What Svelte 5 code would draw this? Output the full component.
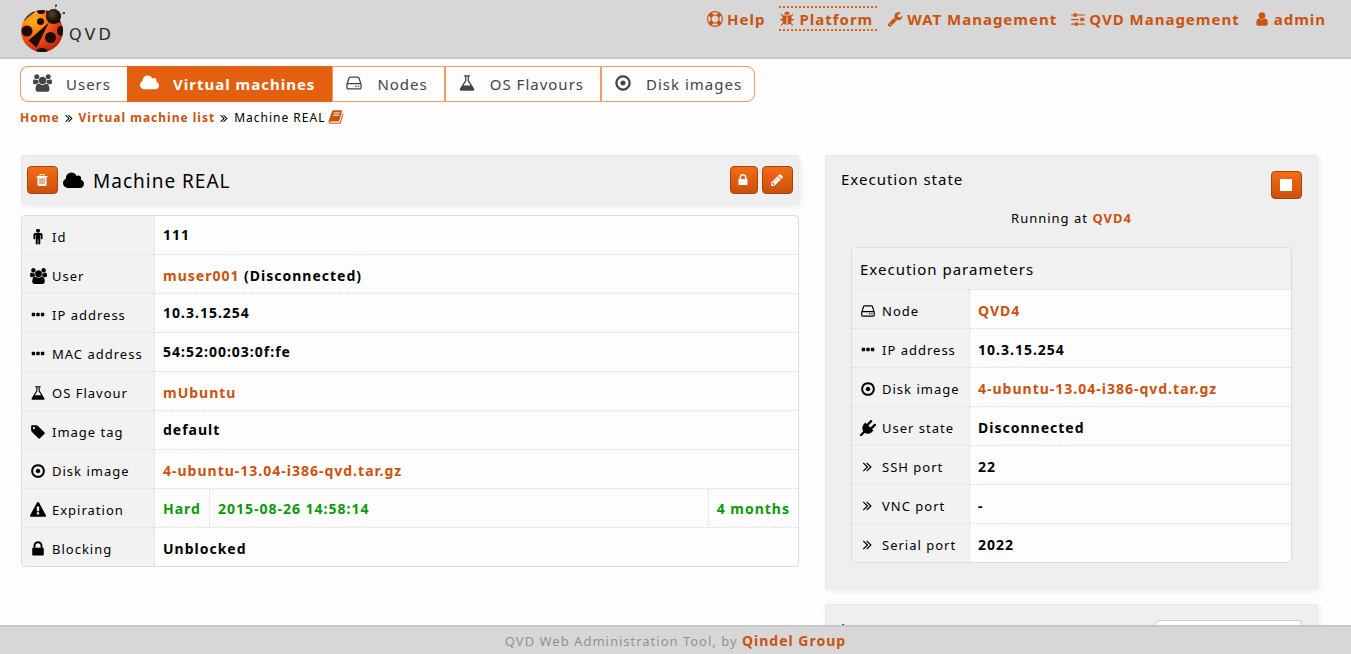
<script>
  const dot = (x) => `M${x} 736v192q0 40-28 68t-68 28h-192q-40 0-68-28t-28-68v-192q0-40 28-68t68-28h192q40 0 68 28t28 68z`;
  const bar = (x) => `M${x} 1376v-704q0-14-9-23t-23-9h-64q-14 0-23 9t-9 23v704q0 14 9 23t23 9h64q14 0 23-9t9-23z`;
  const led = (x) => `M${x} 1216q0 33-23.5 56.5t-56.5 23.5-56.5-23.5-23.5-56.5 23.5-56.5 56.5-23.5 56.5 23.5 23.5 56.5z`;
  const knob = (x, y) => `M${x} ${y}q26 0 45 19t19 45v256q0 26-19 45t-45 19h-256q-26 0-45-19t-19-45v-256q0-26 19-45t45-19z`;

  // Icon name -> [width in units, path]; every icon is 1792 units high.
  const icons = {
    lock: [1792, 'M640 768h512v-192q0-106-75-181t-181-75-181 75-75 181v192zm832 96v576q0 40-28 68t-68 28h-960q-40 0-68-28t-28-68v-576q0-40 28-68t68-28h32v-192q0-184 132-316t316-132 316 132 132 316v192h32q40 0 68 28t28 68z'],
    pencil: [1792, 'M491 1536l91-91-235-235-91 91v107h128v128h107zm523-928q0-22-22-22-10 0-17 7l-542 542q-7 7-7 17 0 22 22 22 10 0 17-7l542-542q7-7 7-17zm-54-192l416 416-832 832h-416v-416zm683 96q0 53-37 90l-166 166-416-416 166-165q36-38 90-38 53 0 91 38l235 234q37 39 37 91z'],
    disk: [1792, 'M1152 896q0 106-75 181t-181 75-181-75-75-181 75-181 181-75 181 75 75 181zm-256-544q-148 0-273 73t-198 198-73 273 73 273 198 198 273 73 273-73 198-198 73-273-73-273-198-198-273-73zm768 544q0 209-103 385.5t-279.5 279.5-385.5 103-385.5-103-279.5-279.5-103-385.5 103-385.5 279.5-279.5 385.5-103 385.5 103 279.5 279.5 103 385.5z'],
    user: [1792, 'M1536 1399q0 109-62.5 187t-150.5 78h-854q-88 0-150.5-78t-62.5-187q0-85 8.5-160.5t31.5-152 58.5-131 94-89 134.5-34.5q131 128 313 128t313-128q76 0 134.5 34.5t94 89 58.5 131 31.5 152 8.5 160.5zm-256-887q0 159-112.5 271.5t-271.5 112.5-271.5-112.5-112.5-271.5 112.5-271.5 271.5-112.5 271.5 112.5 112.5 271.5z'],
    angles: [1792, 'M915 896q0 13-10 23l-466 466q-10 10-23 10t-23-10l-50-50q-10-10-10-23t10-23l393-393-393-393q-10-10-10-23t10-23l50-50q10-10 23-10t23 10l466 466q10 10 10 23zm384 0q0 13-10 23l-466 466q-10 10-23 10t-23-10l-50-50q-10-10-10-23t10-23l393-393-393-393q-10-10-10-23t10-23l50-50q10-10 23-10t23 10l466 466q10 10 10 23z'],
    dots: [1792, dot(576) + dot(1088) + dot(1600)],
    wrench: [1792, 'M448 1472q0-26-19-45t-45-19-45 19-19 45 19 45 45 19 45-19 19-45zm644-420l-682 682q-37 37-90 37-52 0-91-37l-106-108q-38-36-38-90 0-53 38-91l681-681q39 98 114.5 173.5t173.5 114.5zm634-435q0 39-23 106-47 134-164.5 217.5t-258.5 83.5q-185 0-316.5-131.5t-131.5-316.5 131.5-316.5 316.5-131.5q58 0 121.5 16.5t107.5 46.5q16 11 16 28t-16 28l-293 169v224l193 107q5-3 79-48.5t135.5-81 70.5-35.5q15 0 23.5 10t8.5 25z'],
    tag: [1792, 'M576 448q0-53-37.5-90.5t-90.5-37.5-90.5 37.5-37.5 90.5 37.5 90.5 90.5 37.5 90.5-37.5 37.5-90.5zm1067 576q0 53-37 90l-491 492q-39 37-91 37-53 0-90-37l-715-716q-38-37-64.5-101t-26.5-117v-416q0-52 38-90t90-38h416q53 0 117 26.5t102 64.5l715 714q37 39 37 91z'],
    warning: [1792, 'M1024 1375v-190q0-14-9.5-23.5t-22.5-9.5h-192q-13 0-22.5 9.5t-9.5 23.5v190q0 14 9.5 23.5t22.5 9.5h192q13 0 22.5-9.5t9.5-23.5zm-2-374l18-459q0-12-10-19-13-11-24-11h-220q-11 0-24 11-10 7-10 21l17 457q0 10 10 16.5t24 6.5h185q14 0 23.5-6.5t10.5-16.5zm-14-934l768 1408q35 63-2 126-17 29-46.5 46t-63.5 17h-1536q-34 0-63.5-17t-46.5-46q-37-63-2-126l768-1408q17-31 47-49t65-18 65 18 47 49z'],
    flask: [1792, 'M1591 1448q56 89 21.5 152.5t-140.5 63.5h-1152q-106 0-140.5-63.5t21.5-152.5l503-793v-399h-64q-26 0-45-19t-19-45 19-45 45-19h512q26 0 45 19t19 45-19 45-45 19h-64v399zm-779-725l-272 429h712l-272-429-20-31v-436h-128v436z'],
    drive: [1792, led(1168) + led(1424) + 'M1536 1376v-320q0-13-9.5-22.5t-22.5-9.5h-1216q-13 0-22.5 9.5t-9.5 22.5v320q0 13 9.5 22.5t22.5 9.5h1216q13 0 22.5-9.5t9.5-22.5zm-1230-480h1180l-157-482q-4-13-16-21.5t-26-8.5h-782q-14 0-26 8.5t-16 21.5zm1358 160v320q0 66-47 113t-113 47h-1216q-66 0-113-47t-47-113v-320q0-25 16-75l197-606q17-53 63-86t101-33h782q55 0 101 33t63 86l197 606q16 50 16 75z'],
    book: [1792, 'M1703 478q40 57 18 129l-275 906q-19 64-76.5 107.5t-122.5 43.5h-923q-77 0-148.5-53.5t-99.5-131.5q-24-67-2-127 0-4 3-27t4-37q1-8-3-21.5t-3-19.5q2-11 8-21t16.5-23.5 16.5-23.5q23-38 45-91.5t30-91.5q3-10 .5-30t-.5-28q3-11 17-28t17-23q21-36 42-92t25-90q1-9-2.5-32t.5-28q4-13 22-30.5t22-22.5q19-26 42.5-84.5t27.5-96.5q1-8-3-25.5t-2-26.5q2-8 9-18t18-23 17-21q8-12 16.5-30.5t15-35 16-36 19.5-32 26.5-23.5 36-11.5 47.5 5.5l-1 3q38-9 51-9h761q74 0 114 56t18 130l-274 906q-36 119-71.5 153.5t-128.5 34.5h-869q-27 0-38 15-11 16-1 43 24 70 144 70h923q29 0 56-15.5t35-41.5l300-987q7-22 5-57 38 15 59 43zm-1064 2q-4 13 2 22.5t20 9.5h608q13 0 25.5-9.5t16.5-22.5l21-64q4-13-2-22.5t-20-9.5h-608q-13 0-25.5 9.5t-16.5 22.5zm-83 256q-4 13 2 22.5t20 9.5h608q13 0 25.5-9.5t16.5-22.5l21-64q4-13-2-22.5t-20-9.5h-608q-13 0-25.5 9.5t-16.5 22.5z'],
    sliders: [1536, 'M352 1408v128h-352v-128zM864 896v128h-864v-128zM224 384v128h-224v-128zM1536 1408v128h-736v-128zM1536 896v128h-96v-128zM1536 384v128h-864v-128z' + knob(704, 1280) + knob(576, 256) + knob(1344, 768)],
    cloud: [1920, 'M1920 1152q0 159-112.5 271.5t-271.5 112.5h-1088q-185 0-316.5-131.5t-131.5-316.5q0-132 71-241.5t187-163.5q-2-28-2-43 0-212 150-362t362-150q158 0 286.5 88t187.5 230q70-62 166-62 106 0 181 75t75 181q0 75-41 138 129 30 213 134.5t84 239.5z'],
    group: [1920, 'M593 896q-162 5-265 128h-134q-82 0-138-40.5t-56-118.5q0-353 124-353 6 0 43.5 21t97.5 42.5 119 21.5q67 0 133-23-5 37-5 66 0 139 81 256zm1071 637q0 120-73 189.5t-194 69.5h-874q-121 0-194-69.5t-73-189.5q0-53 3.5-103.5t14-109 26.5-108.5 43-97.5 62-81 85.5-53.5 111.5-20q10 0 43 21.5t73 48 107 48 135 21.5 135-21.5 107-48 73-48 43-21.5q61 0 111.5 20t85.5 53.5 62 81 43 97.5 26.5 108.5 14 109 3.5 103.5zm-1024-1277q0 106-75 181t-181 75-181-75-75-181 75-181 181-75 181 75 75 181zm704 384q0 159-112.5 271.5t-271.5 112.5-271.5-112.5-112.5-271.5 112.5-271.5 271.5-112.5 271.5 112.5 112.5 271.5zm576 225q0 78-56 118.5t-138 40.5h-134q-103-123-265-128 81-117 81-256 0-29-5-66 66 23 133 23 59 0 119-21.5t97.5-42.5 43.5-21q124 0 124 353zm-128-609q0 106-75 181t-181 75-181-75-75-181 75-181 181-75 181 75 75 181z'],
    trash: [1792, bar(704) + bar(960) + bar(1216) + 'M672 384h448l-48-117q-7-9-17-11h-317q-10 2-17 11zm928 32v64q0 14-9 23t-23 9h-96v948q0 83-47 143.5t-113 60.5h-832q-66 0-113-58.5t-47-141.5v-952h-96q-14 0-23-9t-9-23v-64q0-14 9-23t23-9h309l70-167q15-37 54-63t79-26h320q40 0 79 26t54 63l70 167h309q14 0 23 9t9 23z'],
    ring: [1792, 'M896 0q182 0 348 71t286 191 191 286 71 348-71 348-191 286-286 191-348 71-348-71-286-191-191-286-71-348 71-348 191-286 286-191 348-71zm0 128q-190 0-361 90l194 194q82-28 167-28t167 28l194-194q-171-90-361-90zm-678 1129l194-194q-28-82-28-167t28-167l-194-194q-90 171-90 361t90 361zm678 407q190 0 361-90l-194-194q-82 28-167 28t-167-28l-194 194q171 90 361 90zm0-384q159 0 271.5-112.5t112.5-271.5-112.5-271.5-271.5-112.5-271.5 112.5-112.5 271.5 112.5 271.5 271.5 112.5zm484-217l194 194q90-171 90-361t-90-361l-194 194q28 82 28 167t-28 167z'],
    bug: [1792, 'M1696 960q0 26-19 45t-45 19h-224q0 171-67 290l208 209q19 19 19 45t-19 45q-18 19-45 19t-45-19l-198-197q-5 5-15 13t-42 28.5-65 36.5-82 29-97 13v-896h-128v896q-51 0-101.5-13.5t-87-33-66-39-43.5-32.5l-15-14-183 207q-20 21-48 21-24 0-43-16-19-18-20.5-44.5t15.5-46.5l202-227q-58-114-58-274h-224q-26 0-45-19t-19-45 19-45 45-19h224v-294l-173-173q-19-19-19-45t19-45 45-19 45 19l173 173h844l173-173q19-19 45-19t45 19 19 45-19 45l-173 173v294h224q26 0 45 19t19 45zm-480-576h-640q0-133 93.5-226.5t226.5-93.5 226.5 93.5 93.5 226.5z'],
    male: [1792, 'M1408 640v416q0 40-28 68t-68 28-68-28-28-68v-352h-64v912q0 46-33 79t-79 33-79-33-33-79v-464h-64v464q0 46-33 79t-79 33-79-33-33-79v-912h-64v352q0 40-28 68t-68 28-68-28-28-68v-416q0-80 56-136t136-56h640q80 0 136 56t56 136zM1120 192a224 224 0 1 1-448 0a224 224 0 1 1 448 0z'],
    plug: [1792, 'M1755 453q37 38 37 90.5t-37 90.5l-401 400 150 150-160 160q-163 163-389.5 186.5t-411.5-100.5l-362 362h-181v-181l362-362q-124-185-100.5-411.5t186.5-389.5l160-160 150 150 400-401q38-37 91-37t90 37 37 90.5-37 90.5l-400 401 234 234 401-400q38-37 91-37t90 37z'],
    stop: [1792, 'M1664 192v1408q0 26-19 45t-45 19h-1408q-26 0-45-19t-19-45v-1408q0-26 19-45t45-19h1408q26 0 45 19t19 45z']
  };

  const menu = [
    { icon: 'ring', text: 'Help' },
    { icon: 'bug', text: 'Platform', active: true },
    { icon: 'wrench', text: 'WAT Management' },
    { icon: 'sliders', text: 'QVD Management' },
    { icon: 'user', text: 'admin' }
  ];
  const tabs = [
    { icon: 'group', text: 'Users' },
    { icon: 'cloud', text: 'Virtual machines', active: true },
    { icon: 'drive', text: 'Nodes' },
    { icon: 'flask', text: 'OS Flavours' },
    { icon: 'disk', text: 'Disk images' }
  ];
  const details = [
    { icon: 'male', label: 'Id', text: '111', top: true },
    { icon: 'group', label: 'User', link: 'muser001', text: ' (Disconnected)' },
    { icon: 'dots', label: 'IP address', text: '10.3.15.254', top: true },
    { icon: 'dots', label: 'MAC address', text: '54:52:00:03:0f:fe', top: true },
    { icon: 'flask', label: 'OS Flavour', link: 'mUbuntu' },
    { icon: 'tag', label: 'Image tag', text: 'default', top: true },
    { icon: 'disk', label: 'Disk image', link: '4-ubuntu-13.04-i386-qvd.tar.gz' },
    { icon: 'warning', label: 'Expiration', parts: ['Hard', '2015-08-26 14:58:14', '4 months'] },
    { icon: 'lock', label: 'Blocking', text: 'Unblocked' }
  ];
  const parameters = [
    { icon: 'drive', label: 'Node', link: 'QVD4' },
    { icon: 'dots', label: 'IP address', text: '10.3.15.254' },
    { icon: 'disk', label: 'Disk image', link: '4-ubuntu-13.04-i386-qvd.tar.gz' },
    { icon: 'plug', label: 'User state', text: 'Disconnected' },
    { icon: 'angles', label: 'SSH port', text: '22' },
    { icon: 'angles', label: 'VNC port', text: '-' },
    { icon: 'angles', label: 'Serial port', text: '2022' }
  ];
</script>

{#snippet icon(name, size)}
  <svg class="icon" width={Math.round((icons[name][0] * size) / 1792)} height={size} viewBox="0 0 {icons[name][0]} 1792" aria-hidden="true">
    <path d={icons[name][1]} fill="currentColor" fill-rule="evenodd" />
  </svg>
{/snippet}

{#snippet row(r)}
  <tr>
    <th scope="row"><span class="label"><span class="slot">{@render icon(r.icon, r.icon === 'lock' ? 18 : 16)}</span>{r.label}</span></th>
    {#if r.parts}
      <td class="split"><div class="parts">{#each r.parts as part}<span>{part}</span>{/each}</div></td>
    {:else}
      <td class:top={r.top}>{#if r.link}<a href="#view">{r.link}</a>{/if}{r.text ?? ''}</td>
    {/if}
  </tr>
{/snippet}

<div class="page">
  <header>
    <a class="logo" href="#home">
      <svg width="48" height="50" viewBox="19 3 48 50" aria-hidden="true">
        <defs>
          <radialGradient id="shell" cx="0.3" cy="0.25" r="0.8">
            <stop offset="0" stop-color="#ffb21c" />
            <stop offset="0.3" stop-color="#f98712" />
            <stop offset="0.6" stop-color="#f04a1c" />
            <stop offset="1" stop-color="#b92510" />
          </radialGradient>
          <radialGradient id="head" cx="0.4" cy="0.35" r="0.7">
            <stop offset="0" stop-color="#5b4430" />
            <stop offset="0.7" stop-color="#170d06" />
          </radialGradient>
          <clipPath id="body"><circle cx="42" cy="31" r="21" /></clipPath>
        </defs>
        <path d="M55 10l1-5M59 15l5-2" stroke="#8b8580" stroke-width="0.7" fill="none" />
        <circle cx="56" cy="5.500" r="1" fill="#111" /><circle cx="64" cy="13" r="1" fill="#111" />
        <circle cx="42" cy="31" r="21" fill="url(#shell)" />
        <g clip-path="url(#body)" fill="#1d0d05">
          <path d="M49 22.500l-20.500 18 8 7z" />
          <circle cx="40.500" cy="21.500" r="3.500" />
          <circle cx="27" cy="31" r="5.500" />
          <circle cx="50.500" cy="37.500" r="5.500" />
          <ellipse cx="61" cy="31" rx="4" ry="5" />
          <ellipse cx="42" cy="52" rx="6" ry="4" />
          <ellipse cx="41" cy="11" rx="4" ry="3" />
          <path d="M22 22q5-11 13-11l-1 2-6 5z" />
          <path d="M46 10h8l8 11-4 2-11-4z" />
        </g>
        <path d="M26 19q5-6 11-6" stroke="#ffd9a0" stroke-width="1" fill="none" opacity="0.7" />
        <circle cx="53.500" cy="16.500" r="7.500" fill="url(#head)" />
      </svg>
      <span>QVD</span>
    </a>
    <nav class="menu">
      {#each menu as m}
        <a href="#menu" class:active={m.active}>{@render icon(m.icon, 16)}{m.text}</a>
      {/each}
    </nav>
  </header>

  <main>
    <nav class="tabs">
      {#each tabs as t}
        <a href="#tab" class:active={t.active}>{@render icon(t.icon, 18)}<span>{t.text}</span></a>
      {/each}
    </nav>
    <nav class="crumbs">
      <a href="#home">Home</a>{@render icon('angles', 13)}<a href="#list">Virtual machine list</a>{@render icon('angles', 13)}<span>Machine REAL</span>
      <a class="doc" href="#doc" aria-label="Documentation">{@render icon('book', 16)}</a>
    </nav>

    <div class="columns">
      <div>
        <section class="card title">
          <button class="btn" aria-label="Delete">{@render icon('trash', 14)}</button>
          <h1>{@render icon('cloud', 20)}Machine REAL</h1>
          <button class="btn narrow" aria-label="Block">{@render icon('lock', 14)}</button>
          <button class="btn" aria-label="Edit">{@render icon('pencil', 14)}</button>
        </section>
        <table class="details">
          <tbody>{#each details as r}{@render row(r)}{/each}</tbody>
        </table>
      </div>

      <div>
        <section class="card state">
          <div class="bar">
            <h2>Execution state</h2>
            <button class="btn" aria-label="Stop">{@render icon('stop', 14)}</button>
          </div>
          <p>Running at <a href="#node">QVD4</a></p>
          <table class="params">
            <thead><tr><th colspan="2">Execution parameters</th></tr></thead>
            <tbody>{#each parameters as r}{@render row(r)}{/each}</tbody>
          </table>
        </section>
        <section class="card log">
          <h2>Log</h2>
          <select aria-label="Log filter"><option>All</option></select>
        </section>
      </div>
    </div>
  </main>

  <footer>QVD Web Administration Tool, by <a href="#qindel">Qindel Group</a></footer>
</div>

<style>
  :global(body) { margin: 0; }
  .page {
    display: grid;
    grid-template-rows: auto 1fr auto;
    height: 100vh;
    background: #fdfdfd;
    color: #000;
    font: 13px/20px "Noto Sans", "Open Sans", sans-serif;
    letter-spacing: 1px;
  }
  .icon { display: block; flex: none; }
  a { color: #c95310; font-weight: 700; text-decoration: none; }
  header {
    display: flex;
    justify-content: space-between;
    align-items: flex-start;
    height: 57px;
    padding: 0 25px 0 19px;
    background: #d7d7d7;
    border-bottom: 2px solid #c8c8c8;
  }
  .logo {
    display: flex;
    align-items: center;
    gap: 2px;
    padding-top: 3px;
    color: #2b2b2b;
    font: 16px/20px "DejaVu Sans", sans-serif;
    letter-spacing: 3px;
  }
  .logo span { padding-top: 14px; }
  .menu { display: flex; gap: 10px; padding-top: 6px; }
  .menu a {
    display: flex;
    align-items: center;
    gap: 4px;
    padding: 1px 4px 0 0;
    font-size: 15px;
    line-height: 20px;
    border: 0 dotted transparent;
    border-width: 2px 0;
  }
  .menu a:last-child { padding-right: 0; }
  .menu a.active { border-color: #e2600f; }

  main { overflow: hidden; padding: 7px 33px 0 20px; }
  .tabs { display: flex; }
  .tabs a {
    display: flex;
    align-items: center;
    gap: 14px;
    height: 34px;
    padding: 0 16px 0 12px;
    border: 1px solid #f29a63;
    color: #444;
    font-size: 15px;
    font-weight: 400;
    background: #fdfdfd;
  }
  .tabs .icon { margin-bottom: 2px; }
  .tabs a:first-child { border-radius: 8px 0 0 8px; border-right: 0; }
  .tabs a:last-child { padding-right: 12px; border-radius: 0 8px 8px 0; }
  .tabs a.active { background: #e2600f; border-color: #e2600f; color: #fff; font-weight: 700; }
  .crumbs { display: flex; align-items: center; gap: 3px; height: 20px; margin-top: 6px; font-size: 12px; }
  .crumbs .doc { padding-bottom: 2px; }

  .columns { display: grid; grid-template-columns: 778fr 493fr; gap: 26px; margin: 27px 0 0 1px; }
  .card {
    box-sizing: border-box;
    background: #efefef;
    border: 1px solid #e8e8e8;
    border-radius: 2px;
    box-shadow: 2px 2px 6px rgba(0, 0, 0, 0.06);
  }
  .title { display: flex; align-items: center; gap: 4px; height: 50px; padding: 0 5px; }
  h1, h2 { margin: 0; font-weight: 400; }
  h1 { display: flex; align-items: center; gap: 9px; flex: 1; padding: 2px 0 0 1px; font-size: 19px; line-height: 28px; }
  h2 { font-size: 15px; line-height: 16px; }
  .btn {
    display: flex;
    align-items: center;
    justify-content: center;
    width: 31px;
    height: 28px;
    padding: 0 2px 0 0;
    color: #fff;
    background: linear-gradient(#f56c16, #cb500b);
    border: 1px solid #a3440d;
    border-radius: 4px;
  }
  .narrow { width: 28px; }

  table {
    width: 100%;
    border: 1px solid #dcdcdc;
    border-radius: 4px;
    border-spacing: 0;
    background: #fdfdfd;
    overflow: hidden;
  }
  .details { margin-top: 10px; }
  th, td { box-sizing: border-box; height: 39px; padding: 0 8px; text-align: left; border-bottom: 1px dotted #dcdcdc; }
  tbody tr:last-child > * { height: 38px; border-bottom: 0; }
  th { background: #f2f2f2; font-weight: 400; }
  tbody th { border-right: 1px dotted #dcdcdc; white-space: nowrap; }
  .details tbody th { width: 133px; }
  .params tbody th { width: 118px; }
  .label { display: flex; align-items: center; gap: 6px; padding-top: 3px; }
  .slot { display: flex; justify-content: center; width: 16px; }
  td { padding-top: 3px; font-size: 14px; font-weight: 700; }
  td.top { padding-top: 9px; vertical-align: top; }
  td.split { padding: 0; color: #0a9a0a; }
  .parts { display: flex; }
  .parts span { padding: 10px 8px 8px; }
  .parts span:nth-child(2) { flex: 1; border: 0 dotted #dcdcdc; border-width: 0 1px; }

  .state { padding: 15px 25px 25px; }
  .bar { display: flex; justify-content: space-between; margin: 0 -10px; }
  .state p { margin: 9px 0 19px; text-align: center; }
  thead th { height: 42px; font-size: 15px; }
  .log { display: flex; justify-content: space-between; margin-top: 15px; padding: 15px 15px 25px; }
  select { width: 147px; height: 30px; border: 1px solid #ccc; border-radius: 4px; background: #fff; }

  footer {
    box-sizing: border-box;
    height: 29px;
    padding-top: 4px;
    background: #d7d7d7;
    border-top: 2px solid #c8c8c8;
    color: #929292;
    text-align: center;
  }
  footer a { font-size: 14px; }
</style>
